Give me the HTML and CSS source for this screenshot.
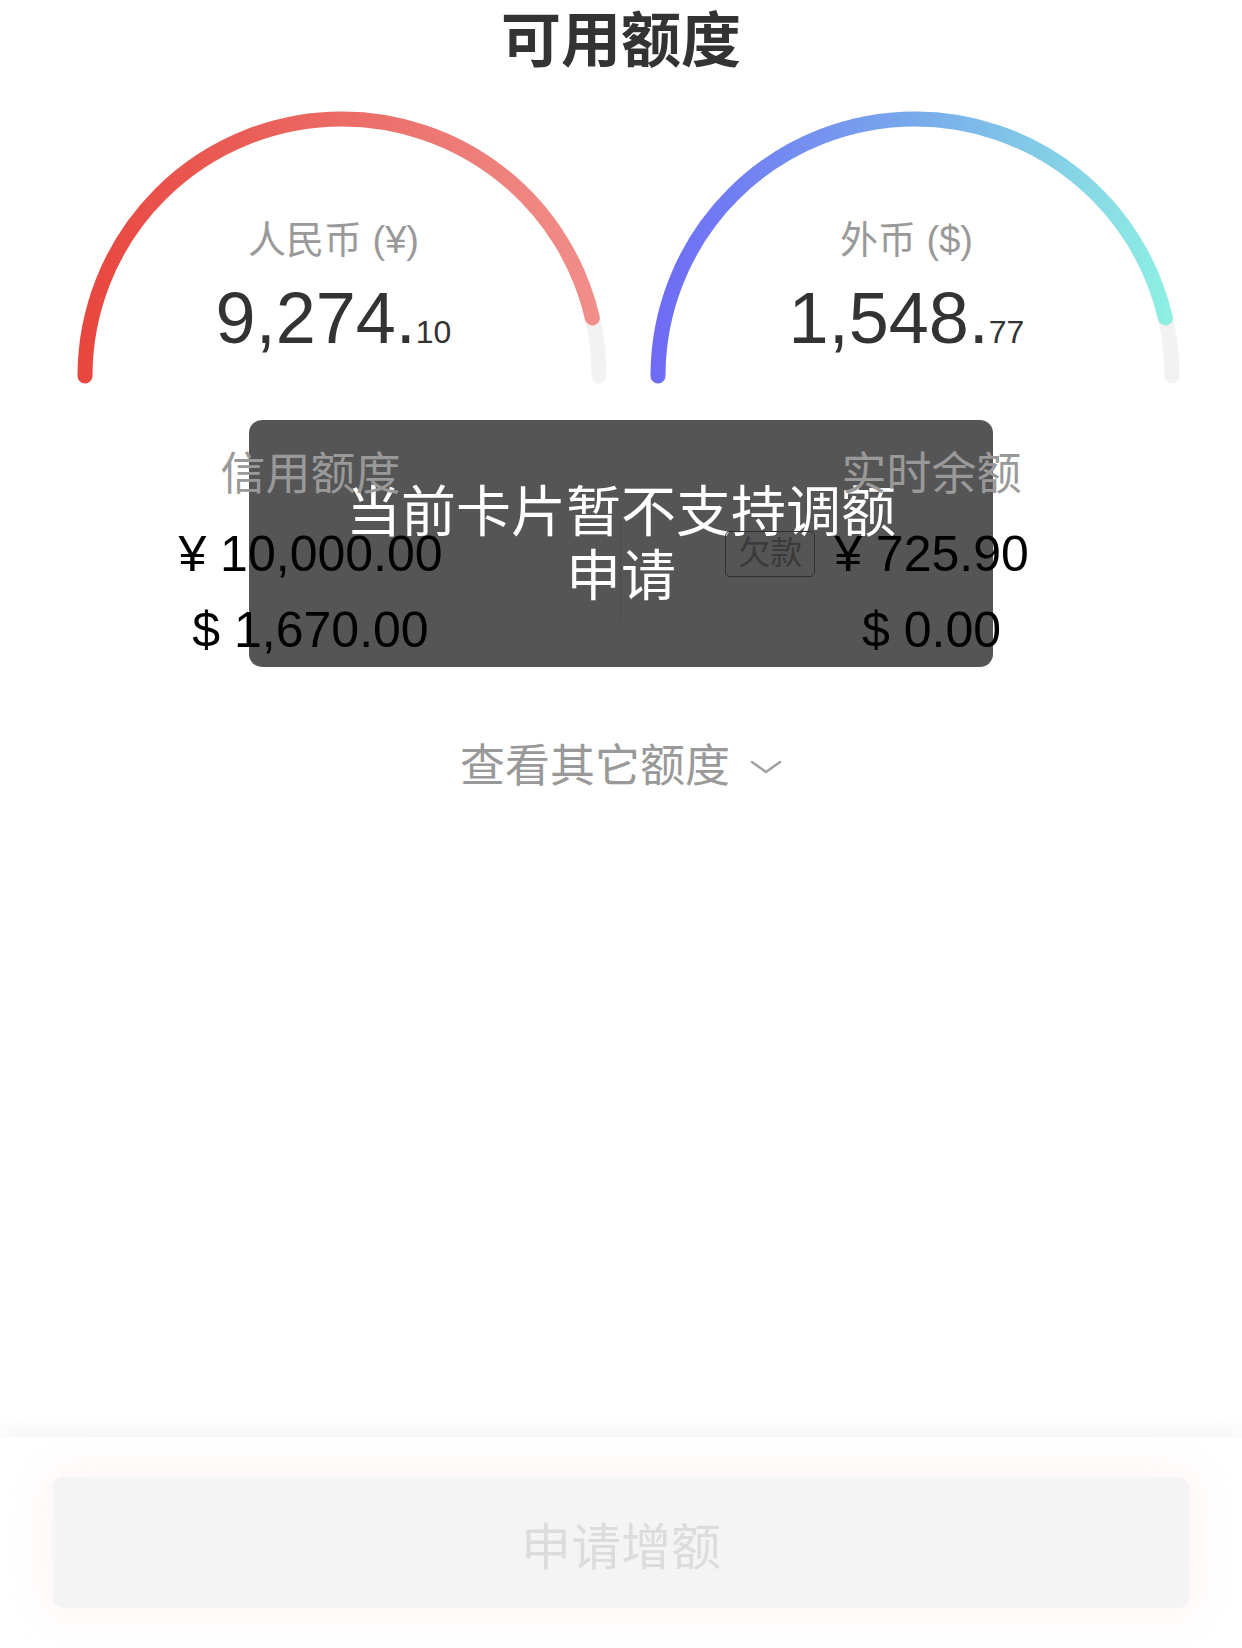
FILE: index.html
```html
<!DOCTYPE html>
<html lang="zh-CN">
<head>
    <meta charset="UTF-8">
    <meta name="viewport" content="width=device-width, initial-scale=1.0">
    <title>可用额度</title>
    <link rel="stylesheet" href="styles.css">
</head>
<body>

    <!-- Main Content -->
    <div class="page">
        <h1 class="title">可用额度</h1>

        <!-- Gauges -->
        <div class="gauges">
            <div class="gauge">
                <svg class="gauge-arc" viewBox="0 0 530 300" width="530" height="300">
                    <defs>
                        <linearGradient id="gradRed" gradientUnits="userSpaceOnUse" x1="0" y1="0" x2="530" y2="0">
                            <stop offset="0" stop-color="#e8463e"/>
                            <stop offset="0.5" stop-color="#eb6b66"/>
                            <stop offset="1" stop-color="#f1908c"/>
                        </linearGradient>
                    </defs>
                    <path class="track" d="M8 292 A257 257 0 0 1 522 292" pathLength="100"/>
                    <path class="bar" d="M8 292 A257 257 0 0 1 522 292" pathLength="100" stroke="url(#gradRed)" stroke-dasharray="92.74 100"/>
                </svg>
                <div class="gauge-text">
                    <div class="gauge-label">人民币 (¥)</div>
                    <div class="gauge-value">9,274.<small>10</small></div>
                </div>
            </div>
            <div class="gauge">
                <svg class="gauge-arc" viewBox="0 0 530 300" width="530" height="300">
                    <defs>
                        <linearGradient id="gradBlue" gradientUnits="userSpaceOnUse" x1="0" y1="0" x2="530" y2="0">
                            <stop offset="0" stop-color="#6e6af6"/>
                            <stop offset="0.5" stop-color="#78aaeb"/>
                            <stop offset="1" stop-color="#8ff2e2"/>
                        </linearGradient>
                    </defs>
                    <path class="track" d="M8 292 A257 257 0 0 1 522 292" pathLength="100"/>
                    <path class="bar" d="M8 292 A257 257 0 0 1 522 292" pathLength="100" stroke="url(#gradBlue)" stroke-dasharray="92.74 100"/>
                </svg>
                <div class="gauge-text">
                    <div class="gauge-label">外币 ($)</div>
                    <div class="gauge-value">1,548.<small>77</small></div>
                </div>
            </div>
        </div>

        <!-- Credit / balance -->
        <div class="stats">
            <div class="stat-col">
                <div class="stat-label">信用额度</div>
                <div class="stat-amount first">¥ 10,000.00</div>
                <div class="stat-amount">$ 1,670.00</div>
            </div>
            <div class="stat-col">
                <div class="stat-label">实时余额</div>
                <div class="stat-amount first"><span class="amount-wrap"><span class="tag">欠款</span>¥ 725.90</span></div>
                <div class="stat-amount">$ 0.00</div>
            </div>
        </div>

        <div class="more">
            <span>查看其它额度</span>
            <svg width="32" height="14" viewBox="0 0 32 14">
                <polyline points="2,2 16,12 30,2" fill="none" stroke="#a0a0a0" stroke-width="2.5" stroke-linecap="round" stroke-linejoin="round"/>
            </svg>
        </div>
    </div>

    <!-- Bottom bar -->
    <div class="footer">
        <button class="apply-btn">申请增额</button>
    </div>

    <!-- Toast -->
    <div class="toast">当前卡片暂不支持调额申请</div>

</body>
</html>
```

FILE: styles.css
```css
/* Global Styles */
body {
    font-family: "Liberation Sans", "Noto Sans CJK SC", sans-serif;
    background-color: #fff;
    margin: 0;
    padding: 0;
    min-height: 100vh;
    display: flex;
    flex-direction: column;
    position: relative;
}
.page {
    flex: 1;
}
.title {
    margin: 0;
    font-size: 60px;
    line-height: 84px;
    font-weight: bold;
    color: #333;
    text-align: center;
}

/* Gauges */
.gauges {
    display: flex;
    gap: 43px;
    padding-left: 77px;
}
.gauge {
    position: relative;
    width: 530px;
    height: 300px;
}
.gauge-arc {
    position: absolute;
    left: 0;
    top: 0;
}
.gauge-arc path {
    fill: none;
    stroke-width: 15;
    stroke-linecap: round;
}
.gauge-arc .track {
    stroke: #f2f2f2;
}
.gauge-text {
    position: relative;
    padding-top: 132px;
    padding-right: 17px;
    text-align: center;
}
.gauge-label {
    font-size: 38px;
    line-height: 48px;
    color: #999;
}
.gauge-value {
    margin-top: 14px;
    font-size: 72px;
    line-height: 80px;
    color: #333;
}
.gauge-value small {
    font-size: 32px;
}

/* Stats */
.stats {
    position: relative;
    z-index: 2;
    display: flex;
    margin-top: 61px;
}
.stats::after {
    content: "";
    position: absolute;
    left: 620px;
    top: 75px;
    width: 1px;
    height: 100px;
    background-color: #4b4b4b;
}
.stat-col {
    width: 50%;
    text-align: center;
}
.stat-label {
    font-size: 45px;
    line-height: 60px;
    color: #999;
}
.stat-amount {
    font-size: 50px;
    line-height: 76px;
    color: #000;
}
.stat-amount.first {
    margin-top: 11px;
}
.amount-wrap {
    position: relative;
}
.tag {
    position: absolute;
    right: calc(100% + 19px);
    top: 50%;
    transform: translateY(-50%);
    box-sizing: border-box;
    height: 46px;
    padding: 0 12px;
    border: 1.5px solid #2f2f2f;
    border-radius: 5px;
    font-size: 32px;
    line-height: 43px;
    color: #3a3a3a;
    white-space: nowrap;
}

/* More link */
.more {
    margin-top: 69px;
    display: flex;
    justify-content: center;
    align-items: center;
    gap: 20px;
    font-size: 45px;
    line-height: 60px;
    color: #999;
}

/* Bottom bar */
.footer {
    height: 211px;
    background-color: #fff;
    box-shadow: 0 -8px 22px rgba(0, 0, 0, 0.045);
    padding: 40px 53px 0;
    box-sizing: border-box;
}
.apply-btn {
    display: block;
    width: 100%;
    height: 131px;
    border: none;
    border-radius: 10px;
    background-color: #f4f4f4;
    box-shadow: 0 0 40px 6px rgba(255, 200, 200, 0.22);
    font-family: "Liberation Sans", "Noto Sans CJK SC", sans-serif;
    font-size: 50px;
    color: #dcdcdc;
}

/* Toast */
.toast {
    position: absolute;
    left: 249px;
    top: 420px;
    width: 744px;
    height: 247px;
    z-index: 1;
    box-sizing: border-box;
    padding: 0 90px;
    display: flex;
    align-items: center;
    justify-content: center;
    text-align: center;
    background-color: #555;
    border-radius: 13px;
    color: #fff;
    font-size: 55px;
    line-height: 64px;
}
```
